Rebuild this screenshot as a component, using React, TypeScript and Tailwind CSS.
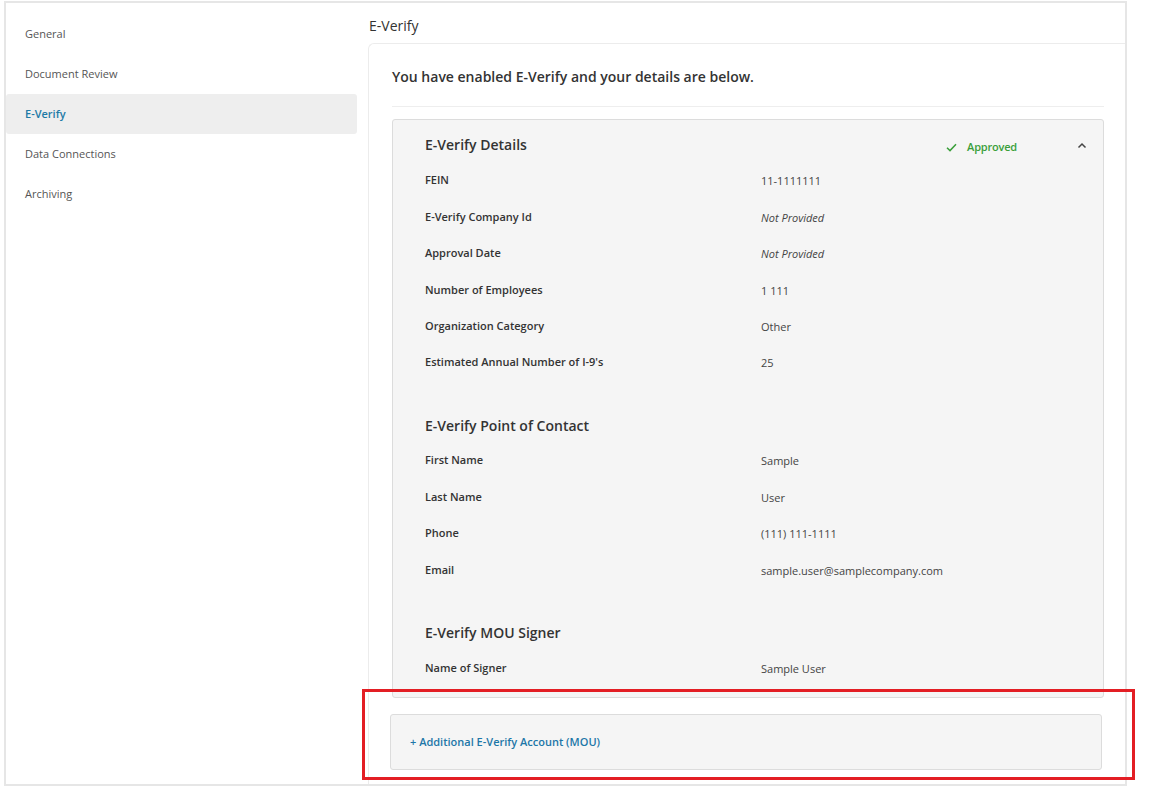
import React from 'react'

const navItems = ['General', 'Document Review', 'E-Verify', 'Data Connections', 'Archiving']

type Row = { label: string; value: string; italic?: boolean }

const details: Row[] = [
  { label: 'FEIN', value: '11-1111111' },
  { label: 'E-Verify Company Id', value: 'Not Provided', italic: true },
  { label: 'Approval Date', value: 'Not Provided', italic: true },
  { label: 'Number of Employees', value: '1 111' },
  { label: 'Organization Category', value: 'Other' },
  { label: "Estimated Annual Number of I-9's", value: '25' },
]

const contact: Row[] = [
  { label: 'First Name', value: 'Sample' },
  { label: 'Last Name', value: 'User' },
  { label: 'Phone', value: '(111) 111-1111' },
  { label: 'Email', value: 'sample.user@samplecompany.com' },
]

const signer: Row[] = [{ label: 'Name of Signer', value: 'Sample User' }]

function DetailRow({ row }: { row: Row }) {
  return (
    <div className="flex h-[36.4px] items-center text-[11px]">
      <div className="w-[336px] font-semibold text-[#333]">{row.label}</div>
      <div className={'pt-[2px] text-[#444] ' + (row.italic ? 'italic' : '')}>{row.value}</div>
    </div>
  )
}

function SectionTitle({ children }: { children: React.ReactNode }) {
  return <div className="flex h-[34px] items-center text-[14px] font-semibold text-[#333]">{children}</div>
}

export default function App() {
  return (
    <div className="relative h-[787px] w-[1154px] bg-white font-['Open_Sans',sans-serif]">
      <div className="ml-[4px] mt-[1px] flex h-[785px] w-[1123px] border-2 border-[#e6e6e6]">
        {/* sidebar */}
        <div className="w-[351px] pt-[11px]">
          {navItems.map((item) => (
            <div
              key={item}
              className={
                'flex h-10 items-center rounded-[3px] pl-[19px] text-[11px] ' +
                (item === 'E-Verify' ? 'bg-[#eeeeee] font-semibold text-[#1d7aa6]' : 'text-[#555]')
              }
            >
              {item}
            </div>
          ))}
        </div>

        {/* main */}
        <div className="ml-[11px] flex flex-1 flex-col">
          <div className="pb-[7px] pl-px pt-[13px] text-[14px] leading-5 text-[#333]">E-Verify</div>
          <div className="flex-1 rounded-tl-md border-l border-t border-[#ececec] pl-[23px] pr-[21px] pt-[23px]">
            <div className="text-[14px] font-semibold leading-5 text-[#333]">
              You have enabled E-Verify and your details are below.
            </div>
            <div className="mt-[19px] h-px bg-[#eeeeee]" />

            <div className="mt-[12px] rounded-[3px] border border-[#dcdcdc] bg-[#f5f5f5] pb-[11px] pl-8 pr-[16px] pt-[6px]">
              <div className="flex h-[36.4px] items-center">
                <div className="flex-1 text-[14px] font-semibold text-[#333]">E-Verify Details</div>
                <div className="mt-[6px] flex items-center text-[11px] font-semibold text-[#3a9f3a]">
                  <svg width="11" height="9" viewBox="0 0 11 9" fill="none">
                    <path d="M1 4.8 L4 7.6 L10 1.2" stroke="#3a9f3a" strokeWidth="1.5" />
                  </svg>
                  <span className="ml-[10px] tracking-[-0.2px]">Approved</span>
                </div>
                <div className="ml-[60px] mt-[2px]">
                  <svg width="10" height="7" viewBox="0 0 10 7" fill="none">
                    <path d="M1.5 5.5 L5 2 L8.5 5.5" stroke="#444" strokeWidth="1.5" />
                  </svg>
                </div>
              </div>
              {details.map((r) => (
                <DetailRow key={r.label} row={r} />
              ))}

              <div className="mt-[27.8px]">
                <SectionTitle>E-Verify Point of Contact</SectionTitle>
              </div>
              {contact.map((r) => (
                <DetailRow key={r.label} row={r} />
              ))}

              <div className="mt-[27.6px]">
                <SectionTitle>E-Verify MOU Signer</SectionTitle>
              </div>
              {signer.map((r) => (
                <DetailRow key={r.label} row={r} />
              ))}
            </div>

            <div className="-ml-[2px] mr-[2px] mt-[16px] flex h-[56px] items-center rounded-[3px] border border-[#dcdcdc] bg-[#f5f5f5] px-[19px] text-[11px] font-semibold text-[#1d77a8]">
              + Additional E-Verify Account (MOU)
            </div>
          </div>
        </div>
      </div>

      {/* annotation box */}
      <div className="absolute left-[362px] top-[688px] h-[91px] w-[773px] border-[3px] border-[#e31e24]" />
    </div>
  )
}
